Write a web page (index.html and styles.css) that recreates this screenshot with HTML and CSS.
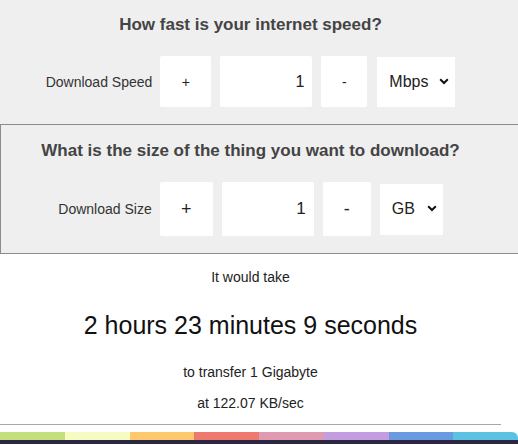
FILE: index.html
```html
<!DOCTYPE html>
<html>
<head>
<meta charset="utf-8">
<link rel="stylesheet" href="styles.css">
</head>
<body>
<section class="panel panel-speed">
  <div class="inner">
    <h2 class="title">How fast is your internet speed?</h2>
    <div class="row">
      <span class="label">Download Speed</span>
      <button class="btn btn-plus">+</button>
      <input class="num" type="text" value="1">
      <button class="btn btn-minus">-</button>
      <div class="sel sel-speed">
        <span class="sel-text">Mbps</span>
        <svg class="chev" width="10" height="7" viewBox="0 0 10 7"><path d="M1.2 1.3 L5 5 L8.8 1.3" fill="none" stroke="#111" stroke-width="2"/></svg>
      </div>
    </div>
  </div>
</section>
<section class="panel panel-size">
  <div class="inner">
    <h2 class="title">What is the size of the thing you want to download?</h2>
    <div class="row">
      <span class="label">Download Size</span>
      <button class="btn btn-plus big">+</button>
      <input class="num big" type="text" value="1">
      <button class="btn btn-minus big">-</button>
      <div class="sel sel-size">
        <span class="sel-text">GB</span>
        <svg class="chev" width="10" height="7" viewBox="0 0 10 7"><path d="M1.2 1.3 L5 5 L8.8 1.3" fill="none" stroke="#111" stroke-width="2"/></svg>
      </div>
    </div>
  </div>
</section>
<section class="result">
  <div class="inner">
    <p class="small first">It would take</p>
    <p class="time">2 hours 23 minutes 9 seconds</p>
    <p class="small transfer">to transfer 1 Gigabyte</p>
    <p class="small rate">at 122.07 KB/sec</p>
    <div class="rule"></div>
  </div>
</section>
<div class="strip">
  <span class="c1"></span><span class="c2"></span><span class="c3"></span><span class="c4"></span><span class="c5"></span><span class="c6"></span><span class="c7"></span><span class="c8"></span>
</div>
<div class="dark"></div>
</body>
</html>
```
FILE: styles.css
```css
* { box-sizing: border-box; }
html, body { margin: 0; padding: 0; }
body {
  font-family: "Liberation Sans", Arial, sans-serif;
  background: #fff;
  color: #222;
  width: 518px;
  overflow: hidden;
}
.inner { width: 501px; }
.panel { background: #efefef; }
.panel-speed { padding: 15px 0 17px; }
.panel-size {
  padding: 16px 0 17px;
  border: 1px solid #8c8c8c;
  border-right: none;
}
.panel-size .inner { margin-left: -1px; }
.title {
  margin: 0 0 21px;
  font-size: 17px;
  line-height: 20px;
  font-weight: bold;
  color: #444;
  text-align: center;
}
.row {
  display: flex;
  justify-content: center;
  align-items: center;
  height: 51px;
}
.panel-size .row { height: 54px; }
.label {
  font-size: 14px;
  color: #333;
  margin-right: 8px;
}
.btn {
  border: none;
  background: #fff;
  border-radius: 2px;
  font-family: inherit;
  color: #222;
  padding: 0;
  height: 51px;
  font-size: 14px;
}
.btn-plus { width: 51px; margin-right: 9px; }
.btn-minus { width: 46px; margin-right: 10px; }
.btn.big { height: 54px; font-size: 18px; }
.btn-plus.big { width: 53px; }
.btn-minus.big { width: 48px; margin-right: 9px; }
.num {
  border: none;
  background: #fff;
  border-radius: 2px;
  width: 92px;
  height: 51px;
  margin-right: 9px;
  text-align: right;
  padding: 0 8px 0 0;
  font-family: inherit;
  font-size: 16px;
  color: #222;
  outline: none;
}
.num.big { height: 54px; font-size: 17px; }
.sel {
  position: relative;
  background: #fff;
  display: flex;
  align-items: center;
  height: 50px;
  font-size: 16px;
  color: #222;
}
.sel-speed { width: 78px; padding-left: 12px; }
.sel-size { width: 63px; height: 51px; padding-left: 12px; }
.chev { position: absolute; right: 6px; top: 50%; margin-top: -4px; }
.result { background: #fff; padding-top: 13px; }
.result p { margin: 0; text-align: center; }
.small { font-size: 14px; line-height: 20px; color: #222; }
.time { margin-top: 23px !important; font-size: 25px; line-height: 30px; color: #111; }
.transfer { margin-top: 22px !important; }
.rate { margin-top: 11px !important; }
.rule {
  margin-top: 11px;
  height: 1px;
  background: #a8a8a8;
}
.strip {
  margin-top: 7px;
  display: flex;
  height: 8px;
  border-top-right-radius: 6px;
  overflow: hidden;
}
.strip span { flex: 1; }
.c1 { background: #c4e07e; }
.c2 { background: #f6fbc2; }
.c3 { background: #fdc96c; }
.c4 { background: #ee796e; }
.c5 { background: #df9bb0; }
.c6 { background: #c49de0; }
.c7 { background: #6a9be0; }
.c8 { background: #5cc2e2; }
.dark { height: 4px; background: #2b2742; }
```
